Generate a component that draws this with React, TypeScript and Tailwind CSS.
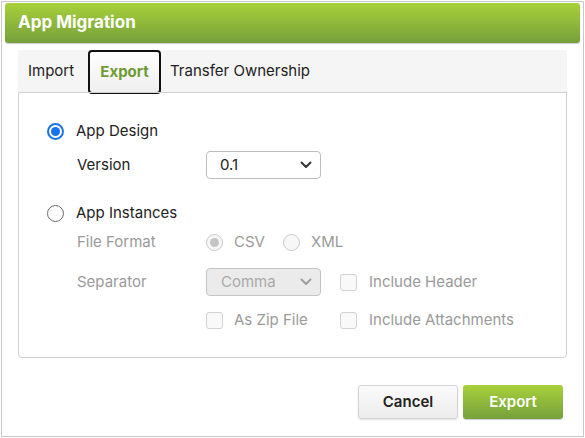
import React from 'react';

const font = { fontFamily: 'Inter, "Open Sans", "Liberation Sans", sans-serif' };

function Radio({ checked, disabled }: { checked?: boolean; disabled?: boolean }) {
  const ring = disabled ? 'border-[#c9c9c9] bg-[#f7f7f7]' : checked ? 'border-[#1a73e8] bg-white' : 'border-[#6b6b6b] bg-white';
  const dot = disabled ? 'bg-[#c4c4c4]' : 'bg-[#1a73e8]';
  return (
    <span className={`flex h-[17px] w-[17px] shrink-0 items-center justify-center rounded-full border ${checked && !disabled ? 'border-2' : ''} ${ring}`}>
      {checked ? <span className={`h-[9px] w-[9px] rounded-full ${dot}`} /> : null}
    </span>
  );
}

function Checkbox() {
  return <span className="h-[17px] w-[17px] shrink-0 rounded-[3px] border border-[#d2d2d2] bg-[#f9f9f9]" />;
}

function Chevron({ color }: { color: string }) {
  return (
    <svg width="12" height="8" viewBox="0 0 12 8" fill="none">
      <path d="M1.5 1.5 6 6l4.5-4.5" stroke={color} strokeWidth="2" strokeLinecap="round" strokeLinejoin="round" />
    </svg>
  );
}

export default function App() {
  return (
    <div className="h-[438px] w-[585px] bg-white text-[15px]" style={font}>
      <div className="ml-px mt-px flex h-[436px] w-[583px] flex-col border border-[#c8c8c8] bg-white">
        <div className="mx-[3px] mt-px flex h-[40px] items-center rounded-[3px] bg-gradient-to-b from-[#a8d13a] to-[#76a03b] pl-[13px] shadow-[0_1px_1px_rgba(0,0,0,0.2)]">
          <span className="text-[17px] font-bold text-white">App Migration</span>
        </div>

        <div className="mx-[16px] mt-[7px] flex flex-col">
          <div className="flex h-[42px] items-stretch bg-[#f5f5f5] pl-[10px] text-[#222]">
            <div className="flex w-[60px] items-center">Import</div>
            <div className="mb-[-2px] flex w-[73px] items-center justify-center rounded-[4px] border-2 border-[#111] bg-gradient-to-b from-white to-[#efefef] font-bold text-[#6f9a34]">
              Export
            </div>
            <div className="flex items-center pl-[9px]">Transfer Ownership</div>
          </div>

          <div className="flex h-[266px] flex-col rounded-b-[4px] border border-[#d0d0d0] pl-[28px] pt-[28px]">
            <div className="flex h-[20px] items-center gap-[12px] text-[#222]">
              <Radio checked />
              <span>App Design</span>
            </div>
            <div className="mt-[10px] flex h-[28px] items-center pl-[30px] text-[#222]">
              <span className="w-[129px]">Version</span>
              <div className="flex h-[28px] w-[115px] items-center justify-between rounded-[4px] border border-[#bdbdbd] bg-white pl-[13px] pr-[8px]">
                <span>0.1</span>
                <Chevron color="#333" />
              </div>
            </div>

            <div className="mt-[24px] flex h-[20px] items-center gap-[12px] text-[#222]">
              <Radio />
              <span>App Instances</span>
            </div>

            <div className="mt-[8px] flex h-[22px] items-center pl-[30px] text-[#9a9a9a]">
              <span className="w-[129px]">File Format</span>
              <div className="flex items-center gap-[11px]">
                <Radio checked disabled />
                <span>CSV</span>
              </div>
              <div className="ml-[18px] flex items-center gap-[11px]">
                <Radio disabled />
                <span>XML</span>
              </div>
            </div>

            <div className="mt-[15px] flex h-[28px] items-center pl-[30px] text-[#9a9a9a]">
              <span className="w-[129px]">Separator</span>
              <div className="flex h-[28px] w-[115px] items-center justify-between rounded-[4px] border border-[#c4c4c4] bg-[#ebebeb] pl-[14px] pr-[8px] text-[#a9a9a9]">
                <span>Comma</span>
                <Chevron color="#a0a0a0" />
              </div>
              <div className="ml-[19px] flex items-center gap-[12px]">
                <Checkbox />
                <span>Include Header</span>
              </div>
            </div>

            <div className="mt-[10px] flex h-[28px] items-center pl-[159px] text-[#9a9a9a]">
              <div className="flex w-[134px] items-center gap-[11px]">
                <Checkbox />
                <span>As Zip File</span>
              </div>
              <div className="flex items-center gap-[12px]">
                <Checkbox />
                <span>Include Attachments</span>
              </div>
            </div>
          </div>
        </div>

        <div className="mt-[27px] flex justify-end gap-[5px] pr-[20px]">
          <button className="h-[34px] w-[100px] rounded-[3px] border border-[#d3d3d3] bg-gradient-to-b from-[#fbfbfb] to-[#ececec] text-[15px] font-semibold text-[#222] shadow-[0_1px_2px_rgba(0,0,0,0.12)]">
            Cancel
          </button>
          <button className="h-[34px] w-[100px] rounded-[3px] bg-gradient-to-b from-[#a8d13a] to-[#76a03b] text-[15px] font-semibold text-white shadow-[0_1px_1px_rgba(0,0,0,0.2)]">
            Export
          </button>
        </div>
      </div>
    </div>
  );
}
